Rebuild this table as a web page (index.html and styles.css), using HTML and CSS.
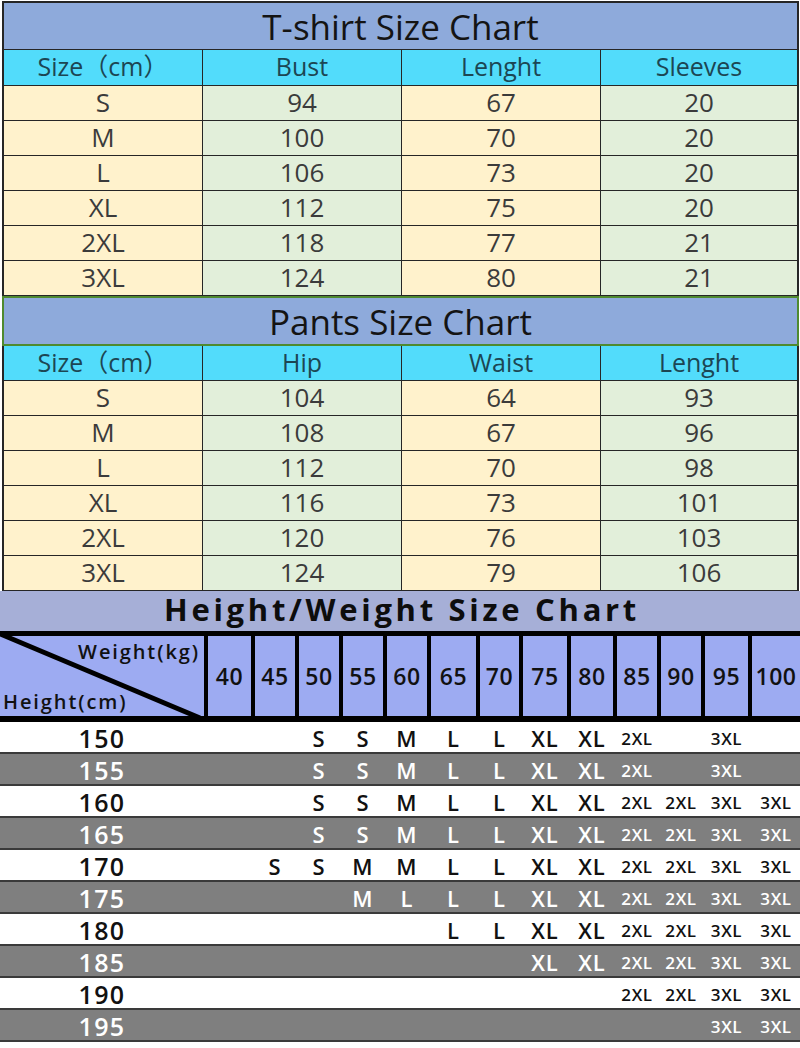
FILE: index.html
```html
<!DOCTYPE html>
<html lang="en">
<head>
<meta charset="utf-8">
<title>Size Chart</title>
<link rel="stylesheet" href="styles.css">
</head>
<body>
<div class="page">
  <section class="chart chart--tshirt">
    <h2 class="chart-title">T-shirt Size Chart</h2>
    <div class="chart-grid">
      <div class="cell cell--head">Size（cm）</div><div class="cell cell--head">Bust</div><div class="cell cell--head">Lenght</div><div class="cell cell--head">Sleeves</div>
      <div class="cell cell--cream">S</div><div class="cell cell--green">94</div><div class="cell cell--cream">67</div><div class="cell cell--green">20</div>
      <div class="cell cell--cream">M</div><div class="cell cell--green">100</div><div class="cell cell--cream">70</div><div class="cell cell--green">20</div>
      <div class="cell cell--cream">L</div><div class="cell cell--green">106</div><div class="cell cell--cream">73</div><div class="cell cell--green">20</div>
      <div class="cell cell--cream">XL</div><div class="cell cell--green">112</div><div class="cell cell--cream">75</div><div class="cell cell--green">20</div>
      <div class="cell cell--cream">2XL</div><div class="cell cell--green">118</div><div class="cell cell--cream">77</div><div class="cell cell--green">21</div>
      <div class="cell cell--cream">3XL</div><div class="cell cell--green">124</div><div class="cell cell--cream">80</div><div class="cell cell--green">21</div>
    </div>
  </section>

  <section class="chart chart--pants">
    <h2 class="chart-title chart-title--green">Pants Size Chart</h2>
    <div class="chart-grid">
      <div class="cell cell--head">Size（cm）</div><div class="cell cell--head">Hip</div><div class="cell cell--head">Waist</div><div class="cell cell--head">Lenght</div>
      <div class="cell cell--cream">S</div><div class="cell cell--green">104</div><div class="cell cell--cream">64</div><div class="cell cell--green">93</div>
      <div class="cell cell--cream">M</div><div class="cell cell--green">108</div><div class="cell cell--cream">67</div><div class="cell cell--green">96</div>
      <div class="cell cell--cream">L</div><div class="cell cell--green">112</div><div class="cell cell--cream">70</div><div class="cell cell--green">98</div>
      <div class="cell cell--cream">XL</div><div class="cell cell--green">116</div><div class="cell cell--cream">73</div><div class="cell cell--green">101</div>
      <div class="cell cell--cream">2XL</div><div class="cell cell--green">120</div><div class="cell cell--cream">76</div><div class="cell cell--green">103</div>
      <div class="cell cell--cream">3XL</div><div class="cell cell--green">124</div><div class="cell cell--cream">79</div><div class="cell cell--green">106</div>
    </div>
  </section>

  <section class="hw">
    <h2 class="hw-title">Height/Weight Size Chart</h2>
    <div class="hw-head">
      <div class="hw-corner">
        <svg class="hw-diag" viewBox="0 0 204 80" preserveAspectRatio="none" aria-hidden="true"><line x1="-2" y1="-3" x2="200" y2="82" stroke="#000" stroke-width="5"/></svg>
        <span class="hw-corner-w">Weight(kg)</span>
        <span class="hw-corner-h">Height(cm)</span>
      </div>
      <div class="hw-wt">40</div><div class="hw-wt">45</div><div class="hw-wt">50</div><div class="hw-wt">55</div><div class="hw-wt">60</div><div class="hw-wt">65</div><div class="hw-wt">70</div><div class="hw-wt">75</div><div class="hw-wt">80</div><div class="hw-wt">85</div><div class="hw-wt">90</div><div class="hw-wt">95</div><div class="hw-wt">100</div>
    </div>

    <div class="hw-row">
      <div class="hw-h">150</div><div></div><div></div><div class="sz">S</div><div class="sz">S</div><div class="sz">M</div><div class="sz">L</div><div class="sz">L</div><div class="sz">XL</div><div class="sz">XL</div><div class="sz sz--sm">2XL</div><div></div><div class="sz sz--sm">3XL</div><div></div>
    </div>
    <div class="hw-row hw-row--dark">
      <div class="hw-h">155</div><div></div><div></div><div class="sz">S</div><div class="sz">S</div><div class="sz">M</div><div class="sz">L</div><div class="sz">L</div><div class="sz">XL</div><div class="sz">XL</div><div class="sz sz--sm">2XL</div><div></div><div class="sz sz--sm">3XL</div><div></div>
    </div>
    <div class="hw-row">
      <div class="hw-h">160</div><div></div><div></div><div class="sz">S</div><div class="sz">S</div><div class="sz">M</div><div class="sz">L</div><div class="sz">L</div><div class="sz">XL</div><div class="sz">XL</div><div class="sz sz--sm">2XL</div><div class="sz sz--sm">2XL</div><div class="sz sz--sm">3XL</div><div class="sz sz--sm">3XL</div>
    </div>
    <div class="hw-row hw-row--dark">
      <div class="hw-h">165</div><div></div><div></div><div class="sz">S</div><div class="sz">S</div><div class="sz">M</div><div class="sz">L</div><div class="sz">L</div><div class="sz">XL</div><div class="sz">XL</div><div class="sz sz--sm">2XL</div><div class="sz sz--sm">2XL</div><div class="sz sz--sm">3XL</div><div class="sz sz--sm">3XL</div>
    </div>
    <div class="hw-row">
      <div class="hw-h">170</div><div></div><div class="sz">S</div><div class="sz">S</div><div class="sz">M</div><div class="sz">M</div><div class="sz">L</div><div class="sz">L</div><div class="sz">XL</div><div class="sz">XL</div><div class="sz sz--sm">2XL</div><div class="sz sz--sm">2XL</div><div class="sz sz--sm">3XL</div><div class="sz sz--sm">3XL</div>
    </div>
    <div class="hw-row hw-row--dark">
      <div class="hw-h">175</div><div></div><div></div><div></div><div class="sz">M</div><div class="sz">L</div><div class="sz">L</div><div class="sz">L</div><div class="sz">XL</div><div class="sz">XL</div><div class="sz sz--sm">2XL</div><div class="sz sz--sm">2XL</div><div class="sz sz--sm">3XL</div><div class="sz sz--sm">3XL</div>
    </div>
    <div class="hw-row">
      <div class="hw-h">180</div><div></div><div></div><div></div><div></div><div></div><div class="sz">L</div><div class="sz">L</div><div class="sz">XL</div><div class="sz">XL</div><div class="sz sz--sm">2XL</div><div class="sz sz--sm">2XL</div><div class="sz sz--sm">3XL</div><div class="sz sz--sm">3XL</div>
    </div>
    <div class="hw-row hw-row--dark">
      <div class="hw-h">185</div><div></div><div></div><div></div><div></div><div></div><div></div><div></div><div class="sz">XL</div><div class="sz">XL</div><div class="sz sz--sm">2XL</div><div class="sz sz--sm">2XL</div><div class="sz sz--sm">3XL</div><div class="sz sz--sm">3XL</div>
    </div>
    <div class="hw-row">
      <div class="hw-h">190</div><div></div><div></div><div></div><div></div><div></div><div></div><div></div><div></div><div></div><div class="sz sz--sm">2XL</div><div class="sz sz--sm">2XL</div><div class="sz sz--sm">3XL</div><div class="sz sz--sm">3XL</div>
    </div>
    <div class="hw-row hw-row--dark">
      <div class="hw-h">195</div><div></div><div></div><div></div><div></div><div></div><div></div><div></div><div></div><div></div><div></div><div></div><div class="sz sz--sm">3XL</div><div class="sz sz--sm">3XL</div>
    </div>
  </section>
</div>
</body>
</html>
```

FILE: styles.css
```css
* { box-sizing: border-box; }

html, body {
  margin: 0;
  padding: 0;
  background: #ffffff;
}

body {
  font-family: "Open Sans", "Noto Sans CJK SC", sans-serif;
}

.page {
  width: 800px;
  height: 1048px;
  overflow: hidden;
  background: #ffffff;
}

/* ---------- T-shirt / Pants charts ---------- */
.chart {
  margin: 0 1px 0 2px;
  border-left: 2px solid #262626;
  border-right: 2px solid #262626;
}

.chart--tshirt {
  margin-top: 1px;
  border-top: 2px solid #262626;
  border-bottom: 1px solid #262626;
}

.chart--pants {
  border-bottom: 1px solid #262626;
}

.chart-title {
  margin: 0;
  height: 47px;
  background: #8eaadb;
  border-bottom: 1px solid #262626;
  font-size: 35px;
  font-weight: 400;
  line-height: 48px;
  text-align: center;
  color: #141414;
}

.chart-title--green {
  margin: 0 -2px;
  height: 50px;
  border: 2px solid #4f8a2f;
  line-height: 47px;
}

.chart-grid {
  display: grid;
  grid-template-columns: 198px 198px 198px 1fr;
  grid-template-rows: 35px;
  grid-auto-rows: 34px;
  gap: 1px;
  background: #262626;
}

.chart--pants .chart-grid {
  grid-template-rows: 34px;
}

.cell {
  display: flex;
  align-items: center;
  justify-content: center;
  font-size: 26px;
  line-height: 1;
  color: #3b3b3b;
  padding-bottom: 2px;
}

.cell--head {
  background: #52dcfb;
  color: #1c4653;
  font-size: 25px;
}

.cell--cream { background: #fff2cc; }
.cell--green { background: #e2efda; }

/* ---------- Height / Weight chart ---------- */
.hw-title {
  margin: 0;
  height: 40px;
  background: #a6afd7;
  font-size: 31px;
  font-weight: 700;
  letter-spacing: 3.7px;
  line-height: 36px;
  text-align: center;
  color: #0d0d0d;
  padding-left: 4px;
}

.hw-head,
.hw-row {
  display: grid;
  grid-template-columns: 204px 43px 40px 40px 40px 40px 45px 39px 44px 42px 40px 40px 43px 1fr;
  column-gap: 4px;
}

.hw-head {
  background: #000000;
  border-top: 5px solid #000000;
  border-bottom: 6px solid #000000;
}

.hw-corner {
  position: relative;
  height: 80px;
  background: #9dabf2;
  display: flex;
  flex-direction: column;
  justify-content: space-between;
  padding: 2px 4px 0 3px;
  font-size: 20px;
  font-weight: 600;
  letter-spacing: 1.9px;
  color: #111111;
  line-height: 28px;
}

.hw-diag {
  position: absolute;
  left: 0;
  top: 0;
  width: 100%;
  height: 100%;
  overflow: visible;
}

.hw-corner-w {
  align-self: flex-end;
  position: relative;
}

.hw-corner-h {
  align-self: flex-start;
  position: relative;
}

.hw-wt {
  background: #9dabf2;
  display: flex;
  align-items: center;
  justify-content: center;
  font-size: 23px;
  font-weight: 600;
  color: #111111;
  letter-spacing: 0.5px;
}

.hw-row {
  height: 32px;
  border-bottom: 2px solid #3a3a3a;
  background: #ffffff;
  color: #111111;
}

.hw-row--dark {
  background: #7f7f7f;
  color: #ffffff;
}

.hw-row > div {
  display: flex;
  align-items: center;
  justify-content: center;
  white-space: nowrap;
  line-height: 1;
  padding-top: 2px;
}

.hw-h {
  font-size: 25px;
  font-weight: 600;
  letter-spacing: 1.4px;
}

.sz {
  font-size: 22px;
  font-weight: 600;
  letter-spacing: 1px;
}

.sz--sm {
  font-size: 17px;
  letter-spacing: 0.6px;
}
```
